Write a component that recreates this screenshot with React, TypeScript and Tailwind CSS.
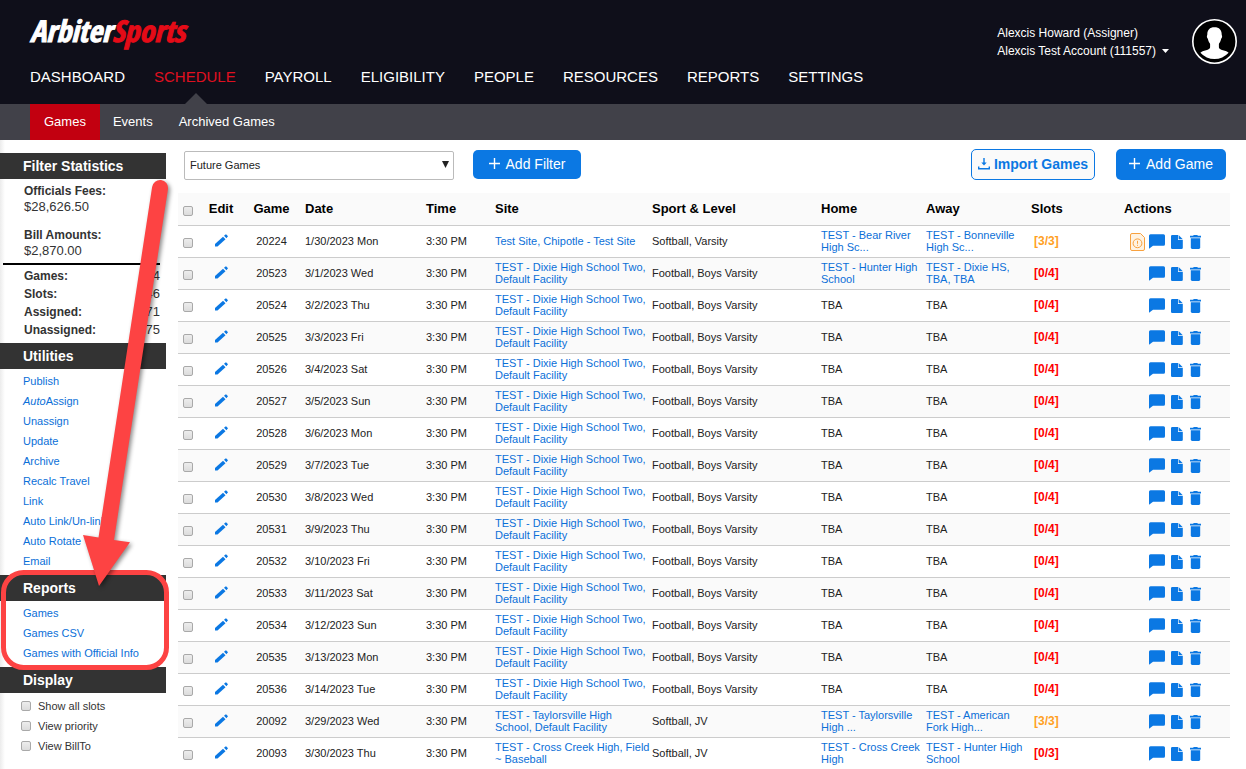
interface Game {
  id: string;
  date: string;
  site: string[];
  sport: string;
  home: string[];
  away: string[];
  slots: string;
  full?: boolean;
  warning?: boolean;
}

const NAV = ["DASHBOARD", "SCHEDULE", "PAYROLL", "ELIGIBILITY", "PEOPLE", "RESOURCES", "REPORTS", "SETTINGS"];

const UTILITIES = [
  "Publish",
  "AutoAssign",
  "Unassign",
  "Update",
  "Archive",
  "Recalc Travel",
  "Link",
  "Auto Link/Un-link",
  "Auto Rotate",
  "Email",
];

const REPORTS = ["Games", "Games CSV", "Games with Official Info"];

const DISPLAY = ["Show all slots", "View priority", "View BillTo"];

const COUNTS = [
  ["Games:", "144"],
  ["Slots:", "546"],
  ["Assigned:", "71"],
  ["Unassigned:", "475"],
];

const DIXIE = ["TEST - Dixie High School Two,", "Default Facility"];

function boysGame(id: string, date: string): Game {
  return { id, date, site: DIXIE, sport: "Football, Boys Varsity", home: ["TBA"], away: ["TBA"], slots: "[0/4]" };
}

const GAMES: Game[] = [
  {
    id: "20224",
    date: "1/30/2023 Mon",
    site: ["Test Site, Chipotle - Test Site"],
    sport: "Softball, Varsity",
    home: ["TEST - Bear River", "High Sc..."],
    away: ["TEST - Bonneville", "High Sc..."],
    slots: "[3/3]",
    full: true,
    warning: true,
  },
  {
    ...boysGame("20523", "3/1/2023 Wed"),
    home: ["TEST - Hunter High", "School"],
    away: ["TEST - Dixie HS,", "TBA, TBA"],
  },
  boysGame("20524", "3/2/2023 Thu"),
  boysGame("20525", "3/3/2023 Fri"),
  boysGame("20526", "3/4/2023 Sat"),
  boysGame("20527", "3/5/2023 Sun"),
  boysGame("20528", "3/6/2023 Mon"),
  boysGame("20529", "3/7/2023 Tue"),
  boysGame("20530", "3/8/2023 Wed"),
  boysGame("20531", "3/9/2023 Thu"),
  boysGame("20532", "3/10/2023 Fri"),
  boysGame("20533", "3/11/2023 Sat"),
  boysGame("20534", "3/12/2023 Sun"),
  boysGame("20535", "3/13/2023 Mon"),
  boysGame("20536", "3/14/2023 Tue"),
  {
    id: "20092",
    date: "3/29/2023 Wed",
    site: ["TEST - Taylorsville High", "School, Default Facility"],
    sport: "Softball, JV",
    home: ["TEST - Taylorsville", "High ..."],
    away: ["TEST - American", "Fork High..."],
    slots: "[3/3]",
    full: true,
  },
  {
    id: "20093",
    date: "3/30/2023 Thu",
    site: ["TEST - Cross Creek High, Field", "~ Baseball"],
    sport: "Softball, JV",
    home: ["TEST - Cross Creek", "High"],
    away: ["TEST - Hunter High", "School"],
    slots: "[0/3]",
  },
];

function Checkbox({ label, id }: { label?: string; id?: string }) {
  return (
    <input
      type="checkbox"
      id={id}
      aria-label={label}
      className="block size-[10px] shrink-0 appearance-none rounded-[2px] border border-[#a9a9a9] bg-linear-to-b from-[#ededed] to-[#dcdcdc] checked:bg-[#0b78e3]"
    />
  );
}

function PencilIcon() {
  return (
    <svg width="13" height="13" viewBox="0 0 13 13" fill="#0b78e3">
      <path d="M0 12.500V10L8 2.700l2.500 2.500L2.500 12.500z" />
      <path d="M9 1.800 10.600.4q.4-.3.700 0l1.500 1.500q.3.400 0 .7L11.400 4.200z" />
    </svg>
  );
}

function CommentIcon() {
  return (
    <svg width="16" height="15" viewBox="0 0 16 15" fill="#0b78e3">
      <path d="M1.500.3h13Q16 .3 16 1.800v8.400q0 1.500-1.500 1.500H4L0 14.800v-13Q0 .3 1.500.3z" />
    </svg>
  );
}

function FileIcon() {
  return (
    <svg width="12" height="14" viewBox="0 0 12 14" fill="#0b78e3">
      <path d="M1.300 0H7v4.900h4.800v7.800q0 1.300-1.300 1.300H1.300Q0 14 0 12.700V1.300Q0 0 1.300 0z" />
      <path d="M7.600 0 11.800 4.200H7.600z" />
    </svg>
  );
}

function TrashIcon() {
  return (
    <svg width="11" height="14" viewBox="0 0 11 14" fill="#0b78e3">
      <path d="M0 .8h3L3.800 0h3.400L8 .8h3v1.600H0z" />
      <path d="M.8 3.300h9.400v9.300q0 1.400-1.400 1.400H2.200Q.8 14 .8 12.600z" />
    </svg>
  );
}

function WarningFileIcon() {
  return (
    <svg width="15" height="18" viewBox="0 0 15 18" fill="#fff3e2" stroke="#f8a13f">
      <path d="M2 .5h8.500l4 4V16q0 1.500-1.500 1.500H2Q.5 17.500.5 16V2Q.5.5 2 .5z" />
      <circle cx="7.500" cy="10.300" r="4.400" />
      <path d="M7.500 7.800v3M7.500 11.800v1" />
    </svg>
  );
}

function Avatar() {
  return (
    <svg width="45" height="45" viewBox="0 0 45 45" aria-label="Profile">
      <circle cx="22.500" cy="22.500" r="21.700" fill="#000" stroke="#fff" strokeWidth="1.600" />
      <path
        d="M22.500 8.200c4.800 0 7.200 2.700 7.200 7.200 0 1 .5 1 .4 2.200-.1 1.400-.8 1.800-1 2.500-.5 2.200-1.200 3.600-2.200 4.700v3.400c0 1.600 1.600 2.300 4 3.100 2.600.8 4.700 1.300 5.700 2.500A19 19 0 0 1 8.400 33.800c1-1.200 3.100-1.700 5.700-2.500 2.400-.8 4-1.500 4-3.100v-3.400c-1-1.100-1.700-2.500-2.200-4.700-.2-.7-.9-1.100-1-2.500-.1-1.200.4-1.200.4-2.200 0-4.500 2.400-7.200 7.200-7.200z"
        fill="#fff"
      />
    </svg>
  );
}

function PlusIcon() {
  return (
    <svg width="11" height="11" viewBox="0 0 11 11" stroke="#fff" strokeWidth="1.400">
      <path d="M5.500 0v11M0 5.500h11" />
    </svg>
  );
}

function DownloadIcon() {
  return (
    <svg width="12" height="12" viewBox="0 0 12 12" fill="none" stroke="#0b78e3" strokeWidth="1.400">
      <path d="M6 0v6M.7 8.500v2.300h10.600V8.500" />
      <path d="M3.300 4.500h5.400L6 7.600z" fill="#0b78e3" stroke="none" />
    </svg>
  );
}

function SideHeading({ children }: { children: string }) {
  return (
    <h2 className="h-[26px] bg-[#333] pl-[23px] text-sm leading-[26px] font-bold text-white">{children}</h2>
  );
}

function SideLinks({ items }: { items: string[] }) {
  return (
    <ul className="pt-[2px] pb-1 pl-[23px] text-[11px] leading-5 text-[#0b6fd8]">
      {items.map((item) => (
        <li key={item} className="whitespace-nowrap">
          <a href="#">
            {item === "AutoAssign" ? (
              <>
                <i>Auto</i>Assign
              </>
            ) : (
              item
            )}
          </a>
        </li>
      ))}
    </ul>
  );
}

function Team({ lines }: { lines: string[] }) {
  if (lines[0] === "TBA") return <>TBA</>;
  return (
    <a href="#" className="block text-[#0b6fd8]">
      {lines.map((line) => (
        <span key={line} className="block">
          {line}
        </span>
      ))}
    </a>
  );
}

function Header() {
  return (
    <header>
      <div className="flex h-[104px] justify-between bg-[#0f0f1a] pr-[9px] pl-[30px] text-white">
        <div>
          <a
            href="#"
            className="mt-[13px] mb-[17px] block font-['Open_Sans_Condensed','Roboto_Condensed','Liberation_Sans',sans-serif] text-[30px] leading-9 font-bold italic [-webkit-text-stroke:1px]"
          >
            Arbiter<span className="text-[#e50b17]">Sports</span>
          </a>
          <nav className="flex gap-[29px] text-[15px] leading-[22px]">
            {NAV.map((item) =>
              item === "SCHEDULE" ? (
                <a key={item} href="#" className="relative text-[#e01020]">
                  {item}
                  <svg className="absolute top-[27px] left-1/2 -ml-[10px]" width="22" height="11" fill="#414149">
                    <path d="M11 0 22 11H0z" />
                  </svg>
                </a>
              ) : (
                <a key={item} href="#">
                  {item}
                </a>
              ),
            )}
          </nav>
        </div>
        <div className="flex items-start gap-[23px] pt-[19px]">
          <button type="button" className="pt-[5px] text-left text-xs leading-[18px]">
            Alexcis Howard (Assigner)
            <span className="flex items-center gap-[6px]">
              Alexcis Test Account (111557)
              <svg width="7" height="4" fill="#fff">
                <path d="M0 0h7L3.500 4z" />
              </svg>
            </span>
          </button>
          <Avatar />
        </div>
      </div>
      <div className="flex h-9 bg-[#414149] pl-[30px] text-[13px] leading-9 text-white">
        <a href="#" className="bg-[#c20010] px-[14px]">
          Games
        </a>
        <a href="#" className="px-[13px]">
          Events
        </a>
        <a href="#" className="px-[13px]">
          Archived Games
        </a>
      </div>
    </header>
  );
}

function Sidebar() {
  return (
    <aside className="relative w-[166px] shrink-0 bg-linear-to-r from-[#ececec] via-white via-[5px] to-white pt-[13px] text-[#333]">
      <SideHeading>Filter Statistics</SideHeading>
      <dl className="pt-1 pl-6 text-[13px] leading-4">
        <dt className="text-xs leading-4 font-bold">Officials Fees:</dt>
        <dd className="mb-3">$28,626.50</dd>
        <dt className="text-xs leading-4 font-bold">Bill Amounts:</dt>
        <dd>$2,870.00</dd>
      </dl>
      <dl className="mt-1 mr-[6px] ml-[3px] border-t-2 border-black pt-[2px] pb-1 pl-[21px] text-[13px] leading-[18px]">
        {COUNTS.map(([label, value]) => (
          <div key={label} className="flex justify-between">
            <dt className="text-xs leading-[18px] font-bold">{label}</dt>
            <dd>{value}</dd>
          </div>
        ))}
      </dl>
      <SideHeading>Utilities</SideHeading>
      <SideLinks items={UTILITIES} />
      <SideHeading>Reports</SideHeading>
      <SideLinks items={REPORTS} />
      <SideHeading>Display</SideHeading>
      <div className="pt-[3px] pl-[21px] text-[11px] leading-5">
        {DISPLAY.map((item) => (
          <div key={item} className="flex items-center gap-[7px]">
            <Checkbox id={item} />
            <label htmlFor={item}>{item}</label>
          </div>
        ))}
      </div>
      <Callout />
    </aside>
  );
}

// Red arrow and frame that point at the Reports section
function Callout() {
  return (
    <svg className="pointer-events-none absolute top-0 left-0 z-10" width="176" height="540" viewBox="0 140 176 540">
      <rect x="3.500" y="572.500" width="163" height="95" rx="20" fill="none" stroke="#fd4343" strokeWidth="5" />
      <path
        d="M152.100 187a8 8 0 0 1 15.900 2L114 540l16 2.300L99 586 83 535l15.500 2.500z"
        fill="#fd4343"
        className="drop-shadow-[2px_2px_2px_rgba(0,0,0,0.45)]"
      />
    </svg>
  );
}

function Toolbar() {
  return (
    <div className="flex h-[31px] items-center pr-1 pl-[6px]">
      <div className="relative pt-[2px]">
        <select
          aria-label="Filter"
          className="block h-[29px] w-[270px] appearance-none rounded-[2px] border border-[#bbb] bg-white pl-[5px] text-[11px] text-[#222]"
        >
          <option>Future Games</option>
        </select>
        <svg className="pointer-events-none absolute top-[12px] right-[5px]" width="7" height="7" fill="#222">
          <path d="M0 0h7L3.500 7z" />
        </svg>
      </div>
      <button
        type="button"
        className="ml-[19px] flex h-[29px] w-[108px] items-center justify-center gap-[6px] rounded-[5px] bg-[#0b78e3] pb-[2px] text-sm text-white"
      >
        <PlusIcon />
        Add Filter
      </button>
      <button
        type="button"
        className="ml-auto flex h-[31px] w-[124px] items-center justify-center gap-1 rounded-[5px] border border-[#0b78e3] bg-[#fafafa] pb-[2px] text-sm font-bold text-[#0b78e3]"
      >
        <DownloadIcon />
        Import Games
      </button>
      <button
        type="button"
        className="ml-[21px] flex h-[31px] w-[110px] items-center justify-center gap-[6px] rounded-[5px] bg-[#0b78e3] pb-[2px] text-sm text-white"
      >
        <PlusIcon />
        Add Game
      </button>
    </div>
  );
}

function GameRow({ game }: { game: Game }) {
  return (
    <tr className="h-8 even:bg-[#fafafa] *:border-b *:border-[#ccc] *:pb-[2px] last:h-[31px] last:*:border-b-0">
      <td className="pt-[5px] pl-[5px]">
        <Checkbox label={`Select game ${game.id}`} />
      </td>
      <td>
        <button type="button" aria-label={`Edit game ${game.id}`} className="mx-auto block w-[13px]">
          <PencilIcon />
        </button>
      </td>
      <td className="text-center">{game.id}</td>
      <td>{game.date}</td>
      <td>3:30 PM</td>
      <td>
        <Team lines={game.site} />
      </td>
      <td>{game.sport}</td>
      <td>
        <Team lines={game.home} />
      </td>
      <td>
        <Team lines={game.away} />
      </td>
      <td className={game.full ? "pl-[3px] text-xs font-bold text-[#ffa01e]" : "pl-[3px] text-xs font-bold text-[#f00]"}>
        {game.slots}
      </td>
      <td className="pt-[2px]">
        <div className="flex items-center justify-end pr-[29px]">
          {game.warning && (
            <button type="button" aria-label="Warnings" className="mr-1">
              <WarningFileIcon />
            </button>
          )}
          <button type="button" aria-label="Comment" className="mr-[6px]">
            <CommentIcon />
          </button>
          <button type="button" aria-label="Notes" className="mr-[7px]">
            <FileIcon />
          </button>
          <button type="button" aria-label="Delete">
            <TrashIcon />
          </button>
        </div>
      </td>
    </tr>
  );
}

function GamesTable() {
  return (
    <table className="mt-[13px] w-full table-fixed border-separate border-spacing-0 text-left text-[11px] leading-3 whitespace-nowrap text-[#222]">
      <thead>
        <tr className="h-[33px] bg-[#fafafa] text-[13px] text-black *:border-b *:border-[#ccc]">
          <th className="w-[26px] pt-[3px] pl-[5px]">
            <Checkbox label="Select all games" />
          </th>
          <th className="w-[34px] text-center">Edit</th>
          <th className="w-[67px] text-center">Game</th>
          <th className="w-[121px]">Date</th>
          <th className="w-[69px]">Time</th>
          <th className="w-[157px]">Site</th>
          <th>Sport &amp; Level</th>
          <th className="w-[105px]">Home</th>
          <th className="w-[105px]">Away</th>
          <th className="w-[93px]">Slots</th>
          <th className="w-[106px]">Actions</th>
        </tr>
      </thead>
      <tbody>
        {GAMES.map((game) => (
          <GameRow key={game.id} game={game} />
        ))}
      </tbody>
    </table>
  );
}

export default function App() {
  return (
    <div className="bg-white font-['Liberation_Sans',Arial,sans-serif]">
      <Header />
      <div className="flex">
        <Sidebar />
        <main className="mr-4 ml-3 min-w-0 flex-1 pt-[9px]">
          <Toolbar />
          <GamesTable />
        </main>
      </div>
    </div>
  );
}
